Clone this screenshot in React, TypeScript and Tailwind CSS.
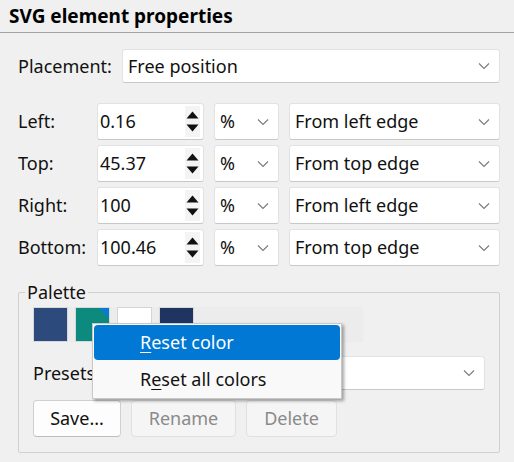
import type { ReactNode } from 'react';

const FONT = '"Noto Sans", "Open Sans", Arial, sans-serif';

function Chevron() {
  return (
    <svg width="12" height="8" viewBox="0 0 12 8" className="shrink-0">
      <path d="M1 1.5 L6 6.5 L11 1.5" fill="none" stroke="#7a7a7a" strokeWidth="1.1" />
    </svg>
  );
}

function Combo({ value, className = '' }: { value: string; className?: string }) {
  return (
    <div
      className={`flex h-full items-center justify-between rounded-[3px] border border-[#e2e2e2] border-b-[#c8c8c8] bg-white pl-[5px] pr-[9px] ${className}`}
    >
      <span className="truncate">{value}</span>
      <Chevron />
    </div>
  );
}

function Spin({ value }: { value: string }) {
  return (
    <div className="flex h-full w-[107px] items-center justify-between rounded-[3px] border border-[#e2e2e2] border-b-[#c8c8c8] bg-white pl-[2px] pr-[3px]">
      <span>{value}</span>
      <div className="flex h-[31px] w-[15px] flex-col items-center justify-center gap-[5px] bg-[#f4f4f4]">
        <svg width="13" height="8" viewBox="0 0 13 8">
          <path d="M6.5 0.5 L12.5 7.5 L0.5 7.5 Z" fill="#111" />
        </svg>
        <svg width="13" height="8" viewBox="0 0 13 8">
          <path d="M0.5 0.5 L12.5 0.5 L6.5 7.5 Z" fill="#111" />
        </svg>
      </div>
    </div>
  );
}

function Button({ children, disabled, className = '' }: { children: ReactNode; disabled?: boolean; className?: string }) {
  return (
    <div
      className={`flex h-[37px] items-center justify-center rounded-[4px] border ${
        disabled ? 'border-[#e0e0e0] bg-[#f5f5f5] text-[#8a8a8a]' : 'border-[#d0d0d0] border-b-[#bdbdbd] bg-[#fdfdfd] text-[#111]'
      } ${className}`}
    >
      {children}
    </div>
  );
}

const rows = [
  { label: 'Left:', value: '0.16', mode: 'From left edge' },
  { label: 'Top:', value: '45.37', mode: 'From top edge' },
  { label: 'Right:', value: '100', mode: 'From left edge' },
  { label: 'Bottom:', value: '100.46', mode: 'From top edge' },
];

export default function App() {
  return (
    <div
      className="relative h-[462px] w-[514px] overflow-hidden bg-[#f0f0f0] text-[18px] text-[#111]"
      style={{ fontFamily: FONT }}
    >
      <div className="flex h-[33px] items-center border-b border-[#a3a3a3] pl-[9px] text-[19px] font-bold text-black">
        SVG element properties
      </div>

      <div className="pl-[18px] pr-[14px]">
        <div className="mt-[16px] flex h-[34px] items-center">
          <span className="w-[104px] shrink-0">Placement:</span>
          <Combo value="Free position" className="flex-1" />
        </div>

        <div className="mt-[20px] flex flex-col gap-[5px]">
          {rows.map((r) => (
            <div key={r.label} className="flex h-[37px] items-center">
              <span className="w-[79px] shrink-0">{r.label}</span>
              <Spin value={r.value} />
              <Combo value="%" className="ml-[10px] w-[65px]" />
              <Combo value={r.mode} className="ml-[10px] flex-1" />
            </div>
          ))}
        </div>

        <fieldset className="mt-[15px] h-[172px] rounded-[2px] border border-[#d0d0d0] px-[14px]">
          <legend className="-ml-[8px] px-[2px] leading-[22px]">Palette</legend>
          <div className="mt-[4px] flex h-[35px] w-[330px] gap-[7px] bg-[#ececec]">
            <div className="h-[35px] w-[35px] border border-[#d8d8d8] bg-[#2c4a7b]" />
            <div className="relative h-[35px] w-[35px] overflow-hidden border border-[#d8d8d8] bg-[#0c8a7e]">
              <svg width="10" height="10" viewBox="0 0 10 10" className="absolute right-0 top-0">
                <path d="M0 0 L10 0 L10 10 Z" fill="#0a78d6" />
              </svg>
            </div>
            <div className="h-[35px] w-[35px] border border-[#d4d4d4] bg-white" />
            <div className="h-[35px] w-[35px] border border-[#d8d8d8] bg-[#1f3461]" />
          </div>

          <div className="mt-[14px] flex h-[34px] items-center">
            <span className="w-[90px] shrink-0">Presets:</span>
            <Combo value="" className="flex-1" />
          </div>

          <div className="mt-[10px] flex gap-[10px]">
            <Button className="w-[88px]">Save...</Button>
            <Button disabled className="w-[105px]">Rename</Button>
            <Button disabled className="w-[91px]">Delete</Button>
          </div>
        </fieldset>
      </div>

      <div className="absolute left-[92px] top-[323px] flex w-[250px] flex-col gap-[2px] border border-[#c8c8c8] bg-[#f9f9f9] p-[1px] shadow-[2px_2px_3px_rgba(0,0,0,0.35)]">
        <div className="flex h-[35px] items-center rounded-[4px] bg-[#0078d4] pl-[46px] text-white">
          <span>
            <span className="underline underline-offset-[3px]">R</span>eset color
          </span>
        </div>
        <div className="flex h-[35px] items-center pl-[46px]">
          <span>
            R<span className="underline underline-offset-[3px]">e</span>set all colors
          </span>
        </div>
      </div>
    </div>
  );
}
